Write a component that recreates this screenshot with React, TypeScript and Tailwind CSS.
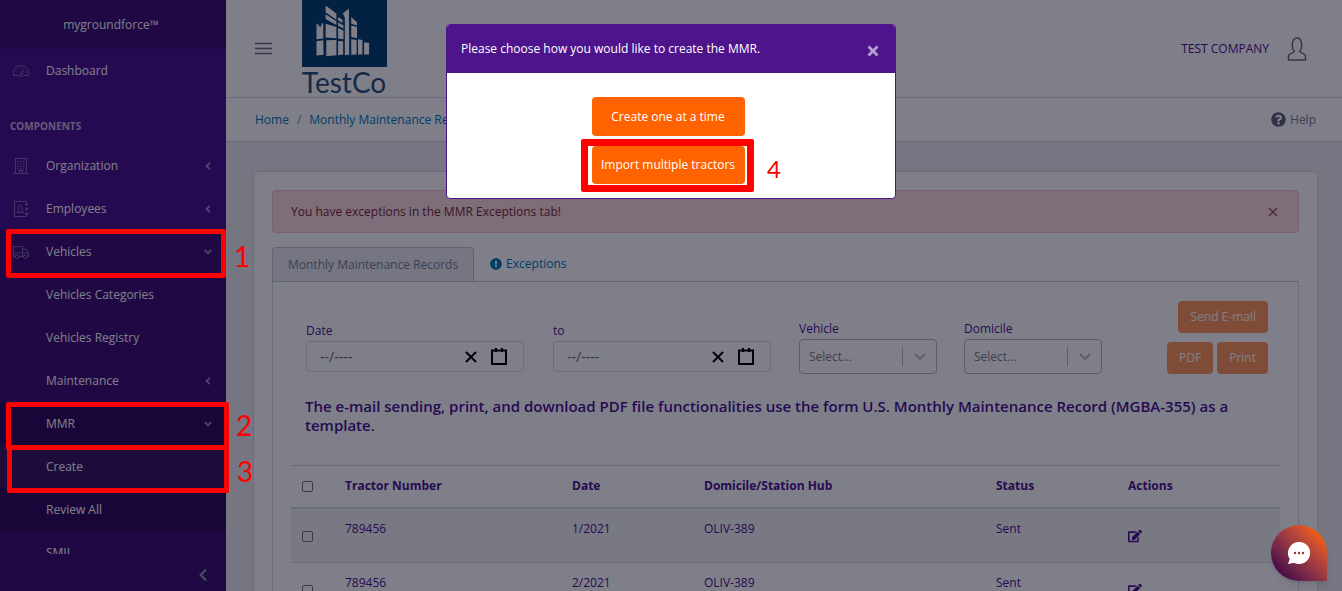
import type { ReactNode } from "react";
import { FaAngleDown, FaAngleLeft, FaChevronLeft, FaEdit, FaExclamationCircle, FaQuestionCircle } from "react-icons/fa";

interface NavItem {
  label: string;
  icon?: ReactNode;
  arrow?: "left" | "down";
  tone?: string;
}

interface MmrRecord {
  tractor: string;
  date: string;
  hub: string;
  status: string;
}

const records: MmrRecord[] = [
  { tractor: "789456", date: "1/2021", hub: "OLIV-389", status: "Sent" },
  { tractor: "789456", date: "2/2021", hub: "OLIV-389", status: "Sent" },
];

function SpeedometerIcon() {
  return (
    <svg viewBox="0 0 16 16" className="size-4" fill="none" stroke="currentColor">
      <path d="M.8 12.500C-.6 6.500 3 2.500 8 2.500s8.600 4 7.200 10h-4.200M.8 12.500H5" />
      <circle cx="8" cy="12" r="1.600" />
      <path d="M8.800 10.500 11 6.500M2.500 9h1M4.200 5.800l.7.700M8 4v1M12.500 9h1" />
    </svg>
  );
}

function BuildingIcon() {
  return (
    <svg viewBox="0 0 16 16" className="size-4" fill="none" stroke="currentColor">
      <path d="M2.500 15V.5h11V15M0 15.500h16M6.500 15v-2.500h3V15" />
      <path d="M4.500 3.500h7M4.500 6h7M4.500 8.500h7M4.500 11h7" strokeDasharray="1.500 1.200" />
    </svg>
  );
}

function ContactIcon() {
  return (
    <svg viewBox="0 0 16 16" className="size-4" fill="none" stroke="currentColor">
      <path d="M13.500 4V.5h-12v15h12V12M13.500 6v4M12 3.500h3.500M12 8h3.500M12 12.500h3.500" />
      <path d="M4 11.500c0-1.700 2-1.500 2-2.700C4.800 7 5.300 4.500 7.300 4.500S9.800 7 8.600 8.800c0 1.200 2 1 2 2.700z" />
    </svg>
  );
}

function TruckIcon() {
  return (
    <svg viewBox="0 0 16 16" className="size-4" fill="none" stroke="currentColor">
      <path d="M2 12.500H.5v-10h9v10H6M9.500 5h3.200l2.800 4v3.500H14M10 12.500H9M.5 9h15" />
      <circle cx="4" cy="12.700" r="1.700" />
      <circle cx="12" cy="12.700" r="1.700" />
    </svg>
  );
}

function UserIcon() {
  return (
    <svg viewBox="0 0 20 24" className="h-6 w-5" fill="none" stroke="currentColor" strokeWidth="1.500">
      <path d="M1.500 23v-4.500c0-1.500 5.800-2.800 5.800-4.500C4.500 11.500 4.300 1 10 1s5.500 10.500 2.700 13c0 1.700 5.800 3 5.800 4.500V23z" />
    </svg>
  );
}

function Logo() {
  return (
    <div className="flex w-[86px] flex-col items-center">
      <svg viewBox="0 0 252 198" className="h-[67px] w-[85px]" preserveAspectRatio="none">
        <rect width="252" height="198" fill="#044270" />
        <g fill="#fff">
          <path d="M43 69l8 7 3 6 6-15 3 3v44l-20 2zM43 122l20-3 1 43-21 2z" />
          <path d="M70 16l32 24v18L70 36zM70 42l32 21v11L70 56zM70 70l32 10v33l-32-2zM72 119l30-1v45l-30 3z" />
          <path d="M107 50l13 8v10l-13-8zM107 66l16 9v9l-16-8zM107 83l16 7v26l-16-2zM107 121l15 1v39l-15 2z" />
          <path d="M121 40l18-15 1 137-13 1V52z" />
          <path d="M146 50l17 16v9l-17-5zM146 75l17 5v33l-17-4zM146 116l16 2v43l-16 1zM166 116l13 2v43h-13zM184 125l15 2v34h-15z" />
        </g>
      </svg>
      <span className="font-[Lato] text-[28px] leading-[30px] text-[#2c5578]">TestCo</span>
    </div>
  );
}

const components: NavItem[] = [
  { label: "Organization", icon: <BuildingIcon />, arrow: "left" },
  { label: "Employees", icon: <ContactIcon />, arrow: "left" },
  { label: "Vehicles", icon: <TruckIcon />, arrow: "down", tone: "bg-[#3e1070]" },
  { label: "Vehicles Categories", tone: "bg-[#3e1070]" },
  { label: "Vehicles Registry", tone: "bg-[#3e1070]" },
  { label: "Maintenance", arrow: "left", tone: "bg-[#3e1070]" },
  { label: "MMR", arrow: "down", tone: "bg-[#320d5a]" },
  { label: "Create", tone: "bg-[#3c1965]" },
  { label: "Review All", tone: "bg-[#320d5a]" },
  { label: "SMIL", tone: "bg-[#3e1070]" },
];

function NavLink({ label, icon, arrow, tone = "" }: NavItem) {
  return (
    <a href="#" className={`flex h-[43px] shrink-0 items-center pr-3 pl-3 ${tone}`}>
      <span className="w-[34px] pl-px text-white/35">{icon}</span>
      <span className="flex-1">{label}</span>
      {arrow === "left" && <FaAngleLeft className="size-3 text-white/50" />}
      {arrow === "down" && <FaAngleDown className="size-3 text-white/50" />}
    </a>
  );
}

function Sidebar() {
  return (
    <aside className="flex w-[226px] shrink-0 flex-col bg-[#4d148c] text-white">
      <div className="flex h-[49px] shrink-0 items-center justify-center bg-[#3e1070] pr-1">mygroundforce™</div>
      <nav className="flex min-h-0 flex-1 flex-col overflow-hidden">
        <NavLink label="Dashboard" icon={<SpeedometerIcon />} />
        <div className="flex h-[52px] shrink-0 items-end px-[10px] pb-2 text-[10px] font-bold text-white/70">
          COMPONENTS
        </div>
        {components.map((item) => (
          <NavLink key={item.label} {...item} />
        ))}
      </nav>
      <button aria-label="Collapse sidebar" className="flex h-[37px] shrink-0 items-center justify-end bg-[#3e1070] pt-1 pr-4">
        <FaChevronLeft className="size-3.5 text-[#869fac]" />
      </button>
    </aside>
  );
}

function MonthField({ id, label }: { id: string; label: string }) {
  return (
    <div className="w-[218px]">
      <label htmlFor={id} className="block leading-5">{label}</label>
      <div className="flex h-[31px] items-center rounded border border-[#d8dbe0] pr-4 pl-[13px] text-black">
        <input id={id} type="text" placeholder="--/----" className="min-w-0 flex-1 text-sm text-[#4f5d73] outline-none placeholder:text-[#666]" />
        <button aria-label={`Clear ${label}`} className="mr-3.5">
          <svg viewBox="0 0 12 12" className="size-3" stroke="currentColor" strokeWidth="2">
            <path d="M1 1l10 10M11 1L1 11" />
          </svg>
        </button>
        <button aria-label={`Open calendar for ${label}`}>
          <svg viewBox="0 0 16 17" className="h-[17px] w-4" fill="none" stroke="currentColor" strokeWidth="2">
            <path d="M1 2.500h14V16H1zM5 0v4M11 0v4" />
          </svg>
        </button>
      </div>
    </div>
  );
}

function SelectField({ id, label }: { id: string; label: string }) {
  return (
    <div className="w-[138px]">
      <label htmlFor={id} className="block leading-5">{label}</label>
      <div className="grid items-center">
        <select id={id} className="col-start-1 row-start-1 h-[35px] appearance-none rounded border border-[#bbb] px-[9px] text-[#808080]">
          <option>Select...</option>
        </select>
        <span className="pointer-events-none col-start-1 row-start-1 flex items-center justify-self-end text-[#bbb]">
          <span className="h-[19px] w-px bg-[#bbb]" />
          <svg viewBox="0 0 12 8" className="mx-[11px] h-2 w-3" fill="none" stroke="currentColor" strokeWidth="2">
            <path d="M1 1l5 5 5-5" />
          </svg>
        </span>
      </div>
    </div>
  );
}

function ActionButton({ children }: { children: ReactNode }) {
  return <button className="h-8 rounded bg-[#ff9a59] px-3 text-white">{children}</button>;
}

function RecordsTable() {
  return (
    <table className="mt-[30px] w-full table-fixed border-collapse text-left">
      <colgroup>
        <col className="w-[42px]" />
        <col className="w-[227px]" />
        <col className="w-[132px]" />
        <col />
        <col className="w-[132px]" />
        <col className="w-[164px]" />
      </colgroup>
      <thead>
        <tr className="h-[42px] border-t border-b-2 border-t-[#d8dbe0] border-b-[#d8dbe0]">
          <th className="pl-[11px]">
            <input type="checkbox" aria-label="Select all" className="block size-[11px] appearance-none rounded-xs border border-[#767676]" />
          </th>
          <th className="pl-3">Tractor Number</th>
          <th className="pl-3">Date</th>
          <th className="pl-3">Domicile/Station Hub</th>
          <th className="pl-3">Status</th>
          <th className="pl-3">Actions</th>
        </tr>
      </thead>
      <tbody>
        {records.map((r) => (
          <tr key={r.date} className="h-[55px] border-b border-[#d8dbe0] align-top odd:bg-black/5">
            <td className="pt-[22px] pl-[11px]">
              <input type="checkbox" aria-label={`Select ${r.date}`} className="block size-[11px] appearance-none rounded-xs border border-[#767676]" />
            </td>
            <td className="pt-2.5 pl-3">{r.tractor}</td>
            <td className="pt-2.5 pl-3">{r.date}</td>
            <td className="pt-2.5 pl-3">{r.hub}</td>
            <td className="pt-2.5 pl-3">{r.status}</td>
            <td className="pt-5 pl-3">
              <button aria-label={`Edit ${r.date}`} className="block">
                <FaEdit className="size-3.5" />
              </button>
            </td>
          </tr>
        ))}
      </tbody>
    </table>
  );
}

function CreateDialog() {
  return (
    <div role="dialog" aria-label="Create MMR" className="w-[450px] overflow-hidden rounded border border-[#4d148c] bg-white text-white">
      <div className="flex h-12 items-center justify-between bg-[#4d148c] pr-4 pl-3.5">
        <span>Please choose how you would like to create the MMR.</span>
        <button aria-label="Close" className="mt-1 text-white/60">
          <svg viewBox="0 0 12 12" className="size-3" stroke="currentColor" strokeWidth="2.800">
            <path d="M1.500 1.500l9 9M10.500 1.500l-9 9" />
          </svg>
        </button>
      </div>
      <div className="flex flex-col items-center gap-2.5 pt-6 pr-1.5 pb-3.5">
        <button className="h-[39px] w-[153px] rounded bg-[#ff6200]">Create one at a time</button>
        <button className="h-[38px] w-[153px] rounded bg-[#ff6200]">Import multiple tractors</button>
      </div>
    </div>
  );
}

// Numbered step markers drawn over everything else
function Steps() {
  return (
    <div className="pointer-events-none absolute inset-0 z-20 font-['Open_Sans'] text-[28px] leading-7 text-[#f00]">
      <div className="absolute top-[229px] left-[6px] h-[49px] w-[220px] rounded-xs border-5 border-[#f00]" />
      <span className="absolute top-[242px] left-[234px] font-[Lato]">1</span>
      <div className="absolute top-[402px] left-[6px] h-[48px] w-[223px] rounded-xs border-5 border-[#f00]" />
      <span className="absolute top-[411px] left-[236px] font-[Lato]">2</span>
      <div className="absolute top-[445px] left-[7px] h-[48px] w-[222px] rounded-xs border-5 border-[#f00]" />
      <span className="absolute top-[457px] left-[237px] font-[Lato]">3</span>
      <div className="absolute top-[139px] left-1/2 -ml-[90px] h-[53px] w-[173px] rounded-xs border-7 border-[#f00]" />
      <span className="absolute top-[153px] left-1/2 ml-24 font-[Lato] text-2xl">4</span>
    </div>
  );
}

export default function App() {
  return (
    <div className="relative flex h-screen overflow-hidden bg-[#ebedef] font-['Open_Sans','Noto_Sans',sans-serif] text-xs leading-5 text-[#4d148c]">
      <Sidebar />

      <div className="flex min-w-0 flex-1 flex-col">
        <header className="flex h-[98px] shrink-0 items-center border-b border-[#d8dbe0] bg-white pr-[35px] pl-[29px]">
          <button aria-label="Toggle menu" className="mr-[29px] text-[#6d6a80]">
            <svg viewBox="0 0 17 13" className="h-[13px] w-[17px]" stroke="currentColor" strokeWidth="1.500">
              <path d="M0 1.500h17M0 6.500h17M0 11.500h17" />
            </svg>
          </button>
          <Logo />
          <span className="mr-[18px] ml-auto">TEST COMPANY</span>
          <button aria-label="Account" className="text-[#6d6a80]">
            <UserIcon />
          </button>
        </header>

        <div className="flex h-11 shrink-0 items-center border-b border-[#d8dbe0] bg-white pr-[26px] pl-[29px]">
          <a href="#" className="text-[#007ab7]">Home</a>
          <span className="px-2 text-[#8a93a2]">/</span>
          <a href="#" className="text-[#007ab7]">Monthly Maintenance Records</a>
          <a href="#" className="ml-auto flex items-center gap-1 text-[#768192]">
            <FaQuestionCircle className="size-[15px] text-[#636078]" />
            Help
          </a>
        </div>

        <main className="min-h-0 flex-1 overflow-hidden pt-[29px] pr-6 pl-[27px]">
          <div className="rounded border border-[#d8dbe0] bg-white p-[18px]">
            <div className="flex h-[43px] items-center justify-between rounded border border-[#f5c2c2] bg-[#fadddd] pr-5 pl-[18px] text-[#772b35]">
              You have exceptions in the MMR Exceptions tab!
              <button aria-label="Dismiss" className="opacity-70">
                <svg viewBox="0 0 10 10" className="size-2.5" stroke="currentColor" strokeWidth="1.500">
                  <path d="M1 1l8 8M9 1L1 9" />
                </svg>
              </button>
            </div>

            <div className="mt-3.5 flex h-[35px] border-b border-[#c4c9d0]">
              <button className="rounded-t border border-b-0 border-[#c4c9d0] bg-[#ebedef] px-[15px] text-[#768192]">
                Monthly Maintenance Records
              </button>
              <button className="flex items-center gap-1 px-4 text-[#007ab7]">
                <FaExclamationCircle className="size-3" />
                Exceptions
              </button>
            </div>

            <div className="border border-t-0 border-[#d8dbe0] px-[18px] pt-[19px] pb-10">
              <div className="flex justify-between pr-3 pl-[15px]">
                <div className="flex items-start">
                  <div className="flex gap-[29px] pt-5">
                    <MonthField id="date-from" label="Date" />
                    <MonthField id="date-to" label="to" />
                  </div>
                  <div className="ml-7 flex gap-[27px] pt-[18px]">
                    <SelectField id="vehicle" label="Vehicle" />
                    <SelectField id="domicile" label="Domicile" />
                  </div>
                </div>
                <div className="flex flex-col items-end gap-[9px]">
                  <ActionButton>Send E-mail</ActionButton>
                  <div className="flex gap-1">
                    <ActionButton>PDF</ActionButton>
                    <ActionButton>Print</ActionButton>
                  </div>
                </div>
              </div>

              <p className="mt-[23px] px-3.5 text-[15px] leading-[19px] font-semibold">
                The e-mail sending, print, and download PDF file functionalities use the form U.S. Monthly Maintenance Record (MGBA-355) as a template.
              </p>

              <RecordsTable />
            </div>
          </div>
        </main>
      </div>

      <div className="absolute inset-0 z-10 flex items-start justify-center bg-[#000015]/50 pt-6">
        <CreateDialog />
      </div>

      <button
        aria-label="Open chat"
        className="absolute right-[15px] bottom-2.5 z-20 flex size-14 items-center justify-center rounded-full rounded-br-md bg-linear-to-tr from-[#4a0a48] from-15% to-[#ee5d05] to-85% shadow-md"
      >
        <svg viewBox="0 0 22 22" className="size-[22px]">
          <path fill="#fff" d="M11 0a11 11 0 1 1-5 20.700L0 22l1.800-5A11 11 0 0 1 11 0z" />
          <g fill="#9a2f28">
            <circle cx="7" cy="11" r="1.200" />
            <circle cx="11" cy="11" r="1.200" />
            <circle cx="15" cy="11" r="1.200" />
          </g>
        </svg>
      </button>

      <Steps />
    </div>
  );
}
